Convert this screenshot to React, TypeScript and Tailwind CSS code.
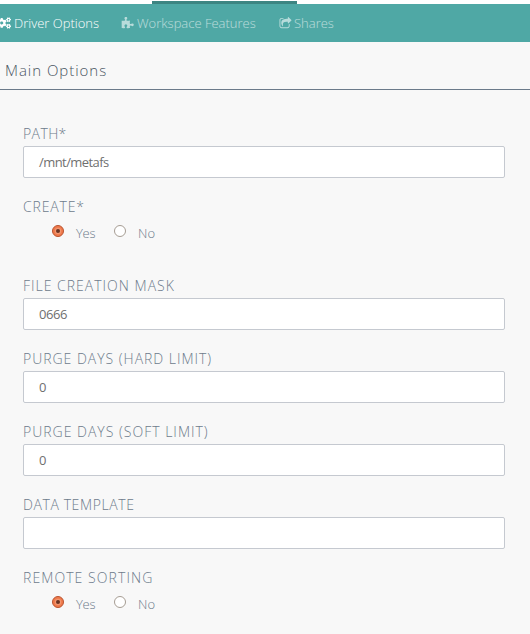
import React from "react";
import { FaCogs } from "react-icons/fa";

function PuzzleIcon() {
  return (
    <svg className="size-[13px]" viewBox="0 0 1792 1792" fill="currentColor">
      <path d="M1755 1083q0 81-44.5 135t-123.5 54q-41 0-77.5-17.5t-59-38-56.5-38-71-17.5q-110 0-110 124 0 39 16 115t15 115v5q-22 0-33 1-34 3-97.5 11.5t-115.5 13.5-98 5q-61 0-103-26.5t-42-83.5q0-37 17.5-71t38-56.5 38-59 17.5-77.5q0-79-54-123.5t-135-44.5q-84 0-143 45.5t-59 127.5q0 43 15 83t33.5 64.5 33.5 53 15 50.5q0 45-46 89-37 35-117 35-95 0-245-24-9-2-27.5-4t-27.5-4l-13-2q-1 0-3-1-2 0-2-1v-1024q2 1 17.5 3.5t34 5 21.5 3.5q150 24 245 24 80 0 117-35 46-44 46-89 0-22-15-50.5t-33.5-53-33.5-64.5-15-83q0-82 59-127.5t144-45.5q80 0 134 44.5t54 123.5q0 41-17.5 77.5t-38 59-38 56.5-17.5 71q0 57 42 83.5t103 26.5q64 0 180-15t163-17v2q-1 2-3.5 17.5t-5 34-3.5 21.5q-24 150-24 245 0 80 35 117 44 46 89 46 22 0 50.5-15t53-33.5 64.5-33.5 83-15q82 0 127.5 59t45.5 143z" />
    </svg>
  );
}

function ShareIcon() {
  return (
    <svg className="size-[13px]" viewBox="0 0 1792 1792" fill="currentColor">
      <path d="M1472 989v259q0 119-84.5 203.5t-203.5 84.5h-832q-119 0-203.5-84.5t-84.5-203.5v-832q0-119 84.5-203.5t203.5-84.5h255q13 0 22.5 9.5t9.5 22.5q0 27-26 32-77 26-133 60-10 4-16 4h-112q-66 0-113 47t-47 113v832q0 66 47 113t113 47h832q66 0 113-47t47-113v-214q0-19 18-29 28-13 54-37 16-16 35-8 21 9 21 29zm237-496l-384 384q-18 19-45 19-12 0-25-5-39-17-39-59v-192h-160q-323 0-438 131-119 137-74 473 3 23-20 34-8 2-12 2-16 0-26-13-10-14-21-31t-39.5-68.5-49.5-99.5-38.5-114-17.5-122q0-49 3.5-91t14-90 28-88 47-81.5 68.5-74 94.5-61.5 124.5-48.5 159.5-30.5 196.5-11h160v-192q0-42 39-59 13-5 25-5 26 0 45 19l384 384q19 19 19 45t-19 45z" />
    </svg>
  );
}

function Label({ text, tracking }: { text: string; tracking: string }) {
  return <div className={`text-[14px] leading-[19px] font-light text-[#6d7b8b] uppercase whitespace-nowrap ${tracking}`}>{text}</div>;
}

function Field({ label, value, tracking, valueTracking = "tracking-[-0.4px]" }: { label: string; value: string; tracking: string; valueTracking?: string }) {
  return (
    <div className="h-[73px]">
      <div className="h-[22px]"><Label text={label} tracking={tracking} /></div>
      <div className={`flex h-8 items-center rounded-[2px] border border-[#c5c9d0] bg-white pt-px pl-[15px] text-[13px] text-[#707070] ${valueTracking}`}>{value}</div>
    </div>
  );
}

function Radio({ on }: { on?: boolean }) {
  return (
    <svg className="mt-px size-3 shrink-0" viewBox="0 0 12 12">
      <circle cx="6" cy="6" r="5.5" fill={on ? "#ef7a4c" : "#fff"} stroke={on ? "#b9532f" : "#a59c92"} strokeWidth="1" />
      {on && <circle cx="6" cy="6" r="3.2" fill="#f29670" />}
      {on && <circle cx="6" cy="6" r="2" fill="#6a3423" />}
    </svg>
  );
}

function YesNo({ label, tracking }: { label: string; tracking: string }) {
  return (
    <div>
      <div className="h-[27px]"><Label text={label} tracking={tracking} /></div>
      <div className="flex pl-[29px] text-[13px] leading-[18px] font-light text-[#6d7b8b]">
        <Radio on />
        <span className="ml-3 w-[38px] tracking-[-0.3px]">Yes</span>
        <Radio />
        <span className="ml-3">No</span>
      </div>
    </div>
  );
}

export default function App() {
  return (
    <div className="h-[634px] w-[530px] overflow-hidden bg-[#f8f8f8] font-['Open_Sans',sans-serif]">
      <div className="h-1 bg-white pt-px pl-[152px]"><div className="h-full w-[145px] bg-[#3d8582]" /></div>
      <nav className="flex h-[38px] items-center bg-[#4fa8a5] text-[13px] font-light whitespace-nowrap text-white">
        <div className="flex w-[121px] shrink-0 items-center gap-[3px]"><FaCogs className="-ml-[3px] size-[14px]" /><span className="pt-0.5">Driver Options</span></div>
        <div className="flex w-[158px] shrink-0 items-center gap-[3px] opacity-60"><PuzzleIcon /><span className="pt-0.5">Workspace Features</span></div>
        <div className="flex items-center gap-[2px] opacity-60"><ShareIcon /><span className="pt-0.5">Shares</span></div>
      </nav>
      <h1 className="h-12 border-b border-[#6b7a8a] pt-[18px] pl-[5px] text-[15px] leading-[21px] font-light tracking-[0.97px] text-[#4a5562]">Main Options</h1>
      <main className="pt-[34px] pr-[25px] pl-[23px]">
        <Field label="Path*" value="/mnt/metafs" tracking="tracking-[0.4px]" valueTracking="tracking-[-0.57px]" />
        <div className="h-[79px]"><YesNo label="Create*" tracking="tracking-[0.85px]" /></div>
        <Field label="File creation mask" value="0666" tracking="tracking-[1px]" />
        <Field label="Purge Days (Hard limit)" value="0" tracking="tracking-[0.98px]" />
        <Field label="Purge Days (Soft limit)" value="0" tracking="tracking-[1px]" />
        <Field label="Data template" value="" tracking="tracking-[0.6px]" />
        <YesNo label="Remote Sorting" tracking="tracking-[1.08px]" />
      </main>
    </div>
  );
}
